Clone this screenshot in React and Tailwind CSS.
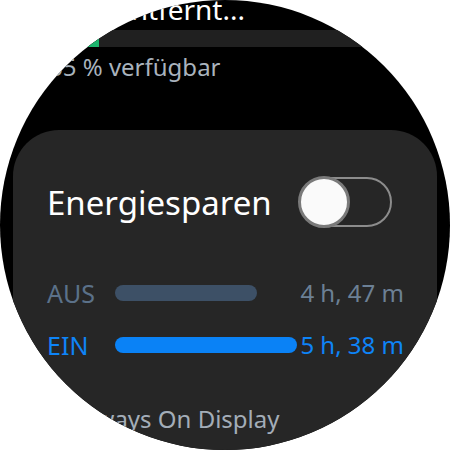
export default function App() {
  const font = { fontFamily: '"Noto Sans", "Open Sans", sans-serif' };
  return (
    <div className="w-[450px] h-[450px] bg-white" style={font}>
      <div className="w-[450px] h-[450px] rounded-full overflow-hidden bg-black flex flex-col">
        <div className="h-[30px] relative">
          <div className="absolute right-[205px] top-[-9px] text-[28px] leading-[36px] text-white whitespace-nowrap">
            Entfernt...
          </div>
        </div>
        <div className="h-[17px] bg-[#202020] flex">
          <div className="w-[99px] bg-[#1db56e]"></div>
        </div>
        <div className="pl-[49px] mt-[5px] text-[24px] leading-[30px] text-[#a9b3bd] whitespace-nowrap">
          65 % verfügbar
        </div>
        <div className="mt-[48px] mx-[13px] flex-1 rounded-t-[46px] bg-[#262626] pl-[34px] pr-[33px] pt-[46px]">
          <div className="flex items-center h-[52px]">
            <span className="text-[33px] text-white leading-none">Energiesparen</span>
            <div className="relative w-[94px] h-[52px] ml-[26px]">
              <div className="absolute left-[1px] top-[1px] right-[0px] bottom-[1px] rounded-full border-2 border-[#8c8c8c]"></div>
              <div className="absolute left-0 top-0 w-[52px] h-[52px] rounded-full bg-[#fafafa] border-[3px] border-[#7a7a7a]"></div>
            </div>
          </div>
          <div className="mt-[50px] flex items-center h-[30px]">
            <span className="w-[68px] text-[25px] leading-none text-[#5b7189]">AUS</span>
            <div className="w-[142px] h-[16px] rounded-full bg-[#3d5066]"></div>
            <span className="ml-auto text-[24px] leading-none text-[#6c8095]">4 h, 47 m</span>
          </div>
          <div className="mt-[22px] flex items-center h-[30px]">
            <span className="w-[68px] text-[25px] leading-none text-[#0e84f7]">EIN</span>
            <div className="w-[182px] h-[16px] rounded-full bg-[#0a82f6]"></div>
            <span className="ml-auto text-[24px] leading-none text-[#0e84f7]">5 h, 38 m</span>
          </div>
          <div className="mt-[47px] ml-[27px] text-[24px] leading-none text-[#a3adb8] whitespace-nowrap">
            Always On Display
          </div>
        </div>
      </div>
    </div>
  );
}
